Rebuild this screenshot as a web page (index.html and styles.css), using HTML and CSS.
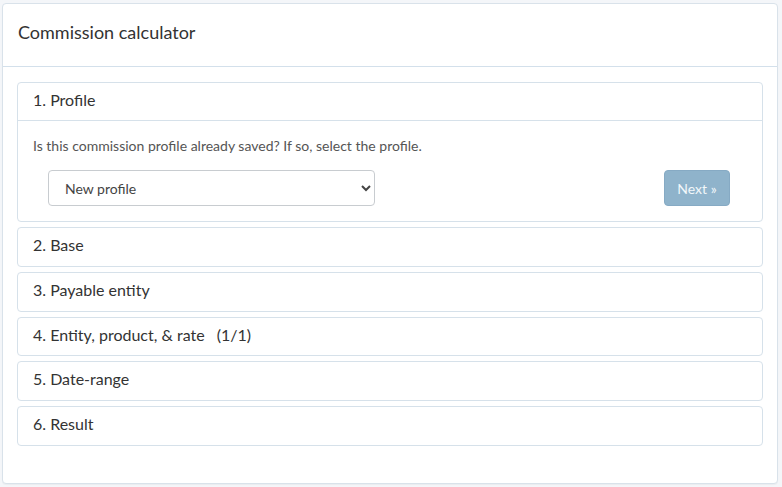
FILE: index.html
```html
<!DOCTYPE html>
<html lang="en">
<head>
    <meta charset="UTF-8">
    <title>Commission calculator</title>
    <link rel="stylesheet" href="styles.css">
</head>
<body>
    <div class="panel">
        <div class="panel-heading">Commission calculator</div>
        <div class="panel-body">
            <div class="step">
                <div class="step-title">1. Profile</div>
                <div class="step-body">
                    <p class="hint">Is this commission profile already saved? If so, select the profile.</p>
                    <div class="step-row">
                        <select class="profile-select">
                            <option>New profile</option>
                        </select>
                        <button class="next-btn" disabled>Next &raquo;</button>
                    </div>
                </div>
            </div>
            <div class="step"><div class="step-title">2. Base</div></div>
            <div class="step"><div class="step-title">3. Payable entity</div></div>
            <div class="step"><div class="step-title">4. Entity, product, &amp; rate <span class="count">(1/1)</span></div></div>
            <div class="step"><div class="step-title">5. Date-range</div></div>
            <div class="step"><div class="step-title">6. Result</div></div>
        </div>
    </div>
</body>
</html>
```

FILE: styles.css
```css
body, html {
    margin: 0;
    background-color: #f4f6f9;
    color: #333;
    font-family: Lato, "Open Sans", sans-serif;
}

body {
    padding: 3px 4px 3px 2px;
}

.panel {
    background-color: #fff;
    border: 1px solid #d9e2ea;
    border-radius: 4px;
    box-shadow: 0 1px 1px rgba(0, 0, 0, 0.04);
}

.panel-heading {
    padding: 18px 15px 23px;
    font-size: 18px;
    line-height: 21px;
    color: #333;
    border-bottom: 1px solid #d3e0eb;
}

.panel-body {
    padding: 15px 14px 37px;
}

.step {
    border: 1px solid #d6e1ea;
    border-radius: 4px;
    margin-bottom: 5px;
}

.step:last-child {
    margin-bottom: 0;
}

.step-title {
    padding: 7px 15px 11.75px;
    font-size: 16px;
    line-height: 19px;
    color: #333;
}

.step:first-child .step-title {
    padding-bottom: 11px;
}

.step-title .count {
    margin-left: 8px;
}

.step-body {
    border-top: 1px solid #d6e1ea;
    padding: 16px 15px 15px;
}

.hint {
    margin: 0 0 15px;
    font-size: 14px;
    line-height: 18px;
    color: #555;
}

.step-row {
    display: flex;
    justify-content: space-between;
    align-items: center;
    padding: 0 17px 0 15px;
}

.profile-select {
    width: 327px;
    height: 36px;
    padding: 0 12px;
    font-family: Lato, sans-serif;
    font-size: 14px;
    color: #444;
    background-color: #fff;
    border: 1px solid #c8ccd0;
    border-radius: 4px;
}

.next-btn {
    width: 66px;
    height: 36px;
    border: 1px solid #86aac4;
    border-radius: 4px;
    background-color: #8fb3cb;
    color: #f2f7fa;
    font-family: Lato, sans-serif;
    font-size: 14px;
    cursor: not-allowed;
}
```
